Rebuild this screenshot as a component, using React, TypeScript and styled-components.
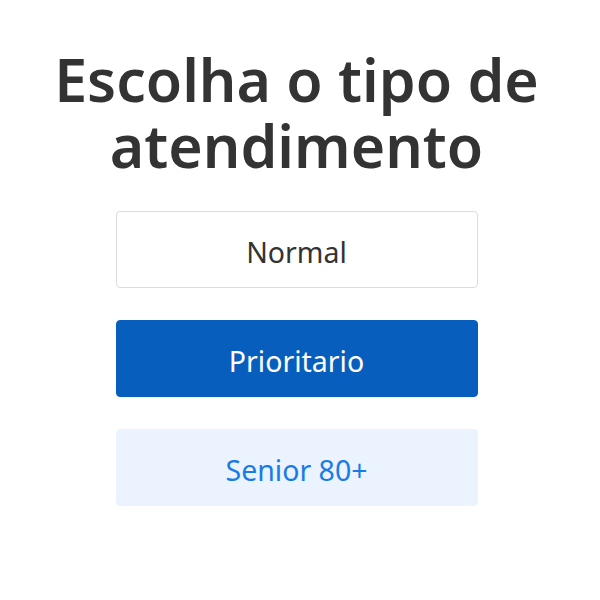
import React from "react";
import styled, { createGlobalStyle } from "styled-components";

const Global = createGlobalStyle`
  html, body { margin: 0; padding: 0; background: #ffffff; }
  body { font-family: "Noto Sans", "Open Sans", sans-serif; }
`;

const Page = styled.main`
  width: 593px;
  display: flex;
  flex-direction: column;
  align-items: center;
  padding-top: 46px;
  box-sizing: border-box;
`;

const Title = styled.h1`
  margin: 0 0 33px;
  font-size: 59px;
  line-height: 66px;
  font-weight: 600;
  color: #333333;
  text-align: center;
  width: 560px;
`;

const Options = styled.div`
  display: flex;
  flex-direction: column;
  gap: 32px;
  width: 362px;
`;

type Variant = "normal" | "primary" | "soft";

const colors: Record<Variant, { bg: string; fg: string; border: string }> = {
  normal: { bg: "#ffffff", fg: "#333333", border: "#dcdcdc" },
  primary: { bg: "#085ebd", fg: "#ffffff", border: "#085ebd" },
  soft: { bg: "#ebf3fe", fg: "#1a7be6", border: "#ebf3fe" },
};

const Option = styled.button<{ $variant: Variant }>`
  height: 77px;
  width: 100%;
  padding: 4px 0 0;
  border-radius: 4px;
  border: 1px solid ${(p) => colors[p.$variant].border};
  background: ${(p) => colors[p.$variant].bg};
  color: ${(p) => colors[p.$variant].fg};
  font-family: "Noto Sans", "Open Sans", sans-serif;
  font-size: 28.5px;
  font-weight: 400;
  cursor: pointer;
`;

export default function App() {
  return (
    <>
      <Global />
      <Page>
        <Title>Escolha o tipo de atendimento</Title>
        <Options>
          <Option $variant="normal">Normal</Option>
          <Option $variant="primary">Prioritario</Option>
          <Option $variant="soft">Senior 80+</Option>
        </Options>
      </Page>
    </>
  );
}
